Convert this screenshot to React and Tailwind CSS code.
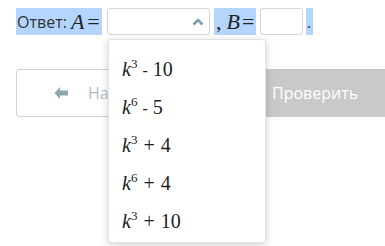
import { useState } from "react";

const options = [
  { k: "3", op: "-", n: "10" },
  { k: "6", op: "-", n: "5" },
  { k: "3", op: "+", n: "4" },
  { k: "6", op: "+", n: "4" },
  { k: "3", op: "+", n: "10" },
];

const Term = ({ k, op, n }) => (
  <span className="font-['Liberation_Serif',serif] text-[20px] text-[#222]">
    <span className="italic">k</span>
    <sup className="text-[13px] top-[-0.6em]">{k}</sup>
    {op === "-" ? (
      <span className="mx-[5px] text-[16px]">-</span>
    ) : (
      <span className="mx-[6px]">+</span>
    )}
    <span>{n}</span>
  </span>
);

const App = () => {
  const [open] = useState(true);

  return (
    <div className="relative w-[385px] h-[246px] overflow-hidden bg-white font-['Open_Sans',sans-serif]">
      <div className="flex items-center pl-4 pt-2">
        <div className="flex items-center w-[86px] h-[27px] bg-[#b4d5fd] text-[16px] text-[#333]">
          <span className="pl-[1px]">Ответ:</span>
          <span className="ml-[4px] font-['Liberation_Serif',serif] italic text-[22px] text-[#222]">A</span>
          <span className="ml-[3px] font-['Liberation_Serif',serif] text-[22px] text-[#222]">=</span>
        </div>
        <div className="ml-[5px] w-[103px] h-[27px] flex items-center justify-end pr-[5px] border border-[#d6d6d6] rounded-[3px] bg-white">
          <svg width="12" height="8" viewBox="0 0 12 8">
            <path d="M1.5 6.5 L6 2 L10.5 6.5" fill="none" stroke="#7f9ea8" strokeWidth="2.6" />
          </svg>
        </div>
        <div className="ml-[4px] flex items-center w-[42px] h-[27px] bg-[#b4d5fd] font-['Liberation_Serif',serif] text-[22px] text-[#222]">
          <span className="pl-[2px]">,</span>
          <span className="ml-[5px] italic">B</span>
          <span className="ml-[2px]">=</span>
        </div>
        <div className="ml-[4px] w-[43px] h-[27px] border border-[#d6d6d6] rounded-[3px] bg-white" />
        <div className="ml-[3px] flex items-center h-[27px] w-[7px] bg-[#b4d5fd] text-[16px] text-[#333]">
          <span className="pl-[1px]">.</span>
        </div>
      </div>

      <div className="flex items-center pl-4 mt-[34px]">
        <button className="flex items-center w-[160px] h-[48px] border border-[#cfd3d5] rounded-[3px] bg-white pl-[36px] text-[16px] text-[#b4bcc4]">
          <svg width="16" height="14" viewBox="0 0 16 14" className="mr-[19px]">
            <path d="M7 1 L1.5 7 L7 13 L7 9.5 L15 9.5 L15 4.5 L7 4.5 Z" fill="#8fa7b1" />
          </svg>
          Назад
        </button>
        <button className="ml-auto w-[132px] h-[48px] bg-[#c9c9c9] text-white text-[16px] pl-[19px] text-left">
          Проверить
        </button>
      </div>

      {open && (
        <div className="absolute left-[108px] top-[39px] w-[158px] h-[204px] bg-white border border-[#e2e2e2] rounded-[3px] shadow-[0_2px_8px_rgba(0,0,0,0.18)] pt-[10px]">
          {options.map((o, i) => (
            <div key={i} className="h-[38px] flex items-center pl-[13px]">
              <Term {...o} />
            </div>
          ))}
        </div>
      )}
    </div>
  );
};

export default App;
